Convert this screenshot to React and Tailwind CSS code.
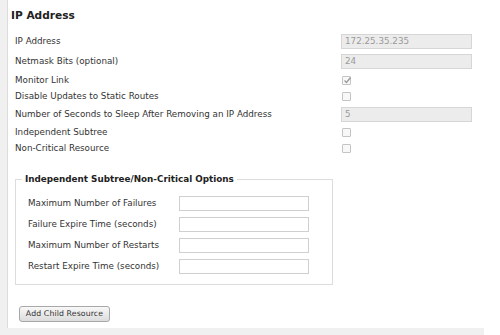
export default function App() {
  const font = { fontFamily: '"DejaVu Sans", Verdana, sans-serif' };
  const topRows = [
    { label: "IP Address", type: "input", value: "172.25.35.235", h: "h-[20px]" },
    { label: "Netmask Bits (optional)", type: "input", value: "24", h: "h-[21px]" },
    { label: "Monitor Link", type: "check", checked: true, h: "h-[16px]" },
    { label: "Disable Updates to Static Routes", type: "check", h: "h-[17px]" },
    { label: "Number of Seconds to Sleep After Removing an IP Address", type: "input", value: "5", h: "h-[18px]" },
    { label: "Independent Subtree", type: "check", h: "h-[18px]" },
    { label: "Non-Critical Resource", type: "check", h: "h-[15px]" },
  ];
  const opts = [
    "Maximum Number of Failures",
    "Failure Expire Time (seconds)",
    "Maximum Number of Restarts",
    "Restart Expire Time (seconds)",
  ];
  return (
    <div className="w-[500px] h-[335px] bg-white overflow-hidden" style={font}>
      <div className="w-[484px] h-[335px] bg-[#f0f0f0] pl-[7px] pb-[7px]">
        <div className="h-[328px] bg-white border-l border-[#dcdcdc] flex flex-col">
          <div className="h-[31px] pl-[3px] pt-[8px] text-[10.6px] font-bold text-[#222] leading-[15px]">
            IP Address
          </div>
          <div className="flex flex-col">
            {topRows.map((r) => (
              <div key={r.label} className={`${r.h} flex items-center`}>
                <div className="w-[333px] pl-[7px] text-[8.75px] text-[#333] leading-none">{r.label}</div>
                {r.type === "input" ? (
                  <div className="w-[131px] h-[15px] bg-[#ececec] border border-[#d6d6d6] text-[8.75px] text-[#9a9a9a] leading-[13px] pl-[3px]">
                    {r.value}
                  </div>
                ) : (
                  <div className="w-[9px] h-[9px] ml-[1px] border border-[#c4c4c4] rounded-[1px] bg-[#f8f8f8] relative">
                    {r.checked && (
                      <svg viewBox="0 0 9 9" className="absolute left-0 top-[-1px] w-[9px] h-[9px]">
                        <path d="M1.5 4.5 L3.5 6.5 L7.5 1.5" stroke="#9a9a9a" strokeWidth="1.3" fill="none" />
                      </svg>
                    )}
                  </div>
                )}
              </div>
            ))}
          </div>
          <div className="ml-[7px] mt-[23px] w-[318px] h-[106px] border border-[#dcdcdc] relative">
            <div className="absolute left-[6px] top-[-7px] bg-white px-[3px] text-[8.8px] font-bold text-[#222] leading-[12px]">
              Independent Subtree/Non-Critical Options
            </div>
            <div className="flex flex-col pt-[13px]">
              {opts.map((o) => (
                <div key={o} className="h-[21px] flex items-center">
                  <div className="w-[163px] pl-[12px] text-[8.75px] text-[#333] leading-none">{o}</div>
                  <div className="w-[130px] h-[15px] bg-white border border-[#cfcfcf]" />
                </div>
              ))}
            </div>
          </div>
          <div className="ml-[11px] mt-[14px]">
            <button className="w-[91px] h-[16px] rounded-[3px] border border-[#a8a8a8] bg-gradient-to-b from-[#f8f8f8] to-[#dcdcdc] text-[7.8px] text-[#333] leading-[14px] tracking-[0.1px]" style={font}>
              Add Child Resource
            </button>
          </div>
        </div>
      </div>
    </div>
  );
}
